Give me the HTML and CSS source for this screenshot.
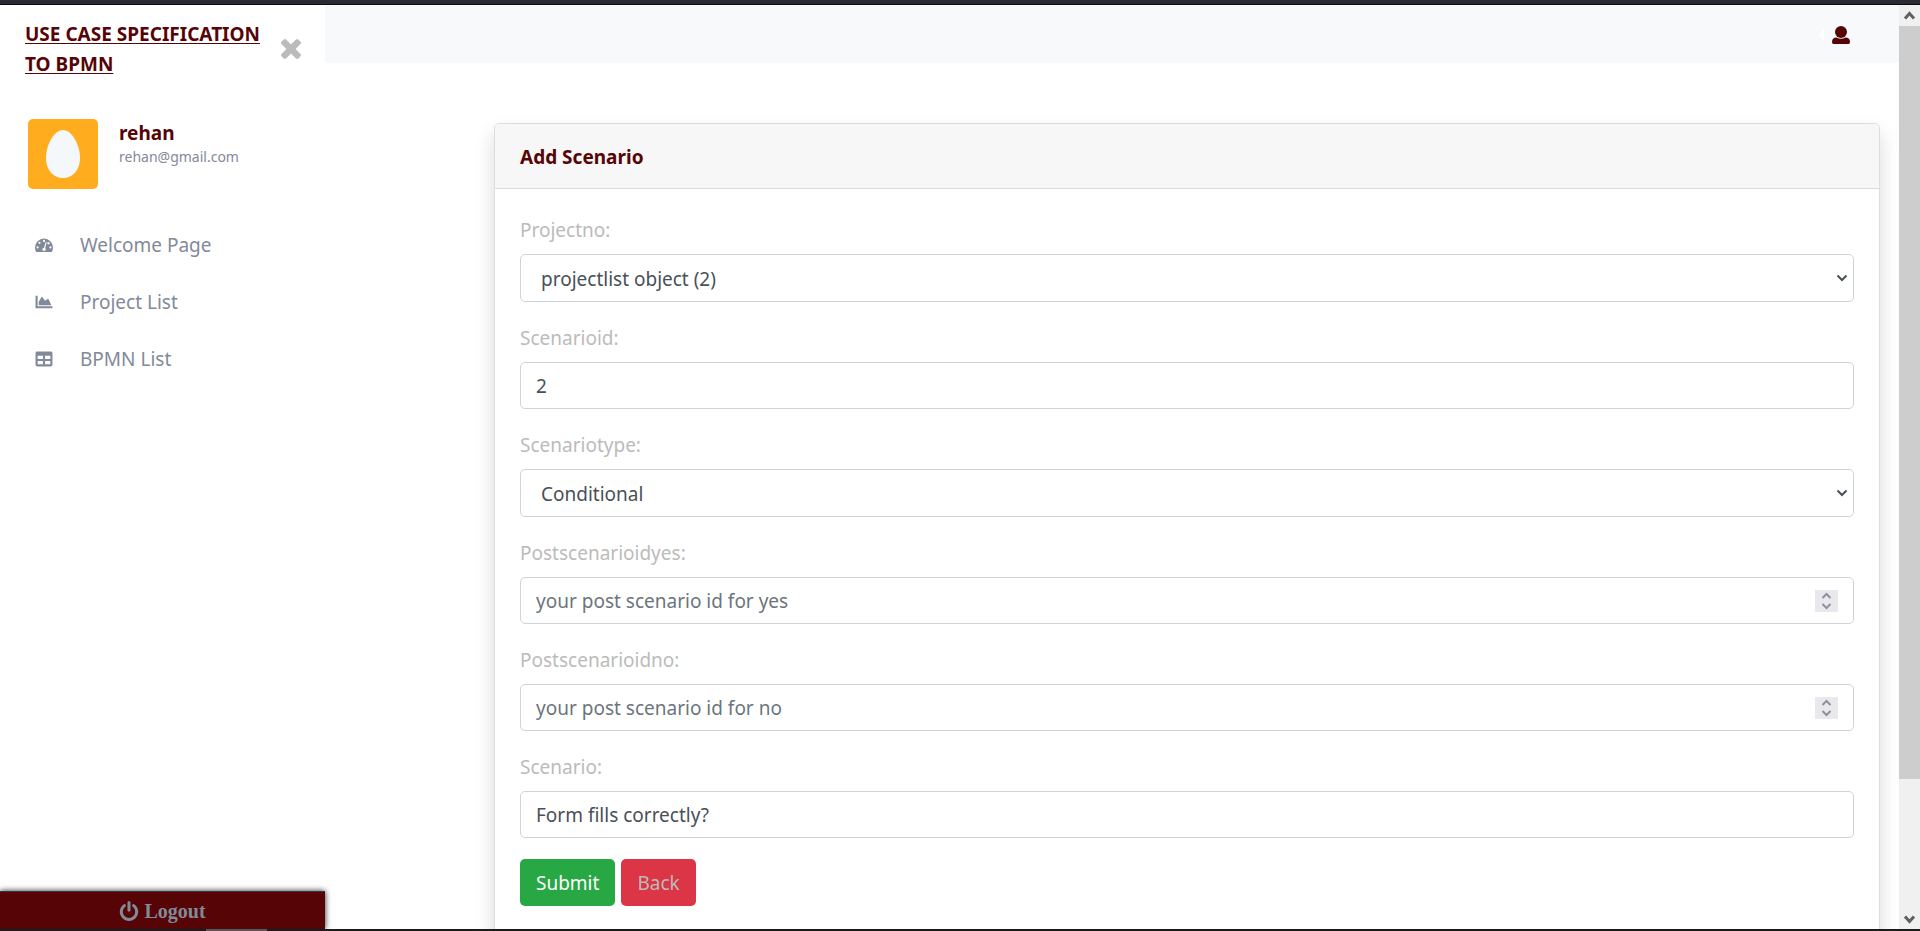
FILE: index.html
```html
<!DOCTYPE html>
<html lang="en">
<head>
<meta charset="utf-8">
<title>Add Scenario</title>
<link rel="stylesheet" href="styles.css">
</head>
<body>
<div class="viewport">
  <aside class="sidebar">
    <div class="brand-row">
      <a class="brand" href="#">USE CASE SPECIFICATION TO BPMN</a>
      <button class="close" type="button" aria-label="Close menu">
        <svg viewBox="302 238 1188 1188"><path d="M1490 1322q0 40-28 68l-136 136q-28 28-68 28t-68-28l-294-294-294 294q-28 28-68 28t-68-28l-136-136q-28-28-28-68t28-68l294-294-294-294q-28-28-28-68t28-68l136-136q28-28 68-28t68 28l294 294 294-294q28-28 68-28t68 28l136 136q28 28 28 68t-28 68l-294 294 294 294q28 28 28 68z" transform="translate(0 -128)"/></svg>
      </button>
    </div>
    <div class="profile">
      <svg class="avatar" viewBox="0 0 70 70"><rect width="70" height="70" rx="5" fill="#ffac1f"/><path d="M35 11C44 11 52 26 52 39C52 51 45 59 35 59S18 51 18 39C18 26 26 11 35 11Z" fill="#f4f8fb"/></svg>
      <div>
        <div class="user-name">rehan</div>
        <div class="user-mail">rehan@gmail.com</div>
      </div>
    </div>
    <nav class="menu">
      <a href="#"><svg viewBox="0 0 18 16"><path fill-rule="evenodd" d="M9 1.500A9 9 0 0 0 0 10.500Q0 13 1.200 15H16.800Q18 13 18 10.500A9 9 0 0 0 9 1.500ZM9 2.800a1.100 1.100 0 1 1 0 2.200a1.100 1.100 0 1 1 0-2.200ZM4.500 4.700a1.100 1.100 0 1 1 0 2.200a1.100 1.100 0 1 1 0-2.200ZM2.600 9.300a1.100 1.100 0 1 1 0 2.200a1.100 1.100 0 1 1 0-2.200ZM15.400 9.300a1.100 1.100 0 1 1 0 2.200a1.100 1.100 0 1 1 0-2.200ZM13.800 5.200a1.100 1.100 0 1 1-.6 2.100a1.100 1.100 0 1 1 .6-2.100ZM10.700 5.100L11.700 5.400L10.200 11A2 2 0 0 1 10.300 13.700H7.700A2 2 0 0 1 9.100 10.700Z"/></svg>Welcome Page</a>
      <a href="#"><svg viewBox="-16 32 544 448"><path d="M500 384c6.600 0 12 5.400 12 12v40c0 6.600-5.400 12-12 12H12c-6.600 0-12-5.400-12-12V76c0-6.600 5.400-12 12-12h40c6.600 0 12 5.400 12 12v308h436zM372.700 159.500L288 216l-85.300-113.700c-5.100-6.800-15.500-6.300-19.900 1L96 248v104h384l-89.900-187.800c-3.200-6.500-11.400-8.700-17.400-4.700z"/></svg>Project List</a>
      <a href="#"><svg viewBox="-16 16 544 480"><path d="M464 32H48C21.490 32 0 53.490 0 80v352c0 26.510 21.490 48 48 48h416c26.510 0 48-21.490 48-48V80c0-26.510-21.490-48-48-48zM224 416H64v-96h160v96zm0-160H64v-96h160v96zm224 160H288v-96h160v96zm0-160H288v-96h160v96z"/></svg>BPMN List</a>
    </nav>
    <a class="logout" href="#"><svg viewBox="128 0 1536 1664"><path d="M1664 896q0 156-61 298t-164 245-245 164-298 61-298-61-245-164-164-245-61-298q0-182 80.500-343t226.500-270q43-32 95.500-25t83.500 50q32 42 24.500 94.500t-49.500 84.500q-98 74-151.500 181t-53.500 228q0 104 40.500 198.500t109.500 163.500 163.500 109.500 198.500 40.500 198.500-40.500 163.500-109.500 109.500-163.500 40.500-198.500q0-121-53.500-228t-151.500-181q-42-32-49.500-84.500t24.500-94.500q31-43 84-50t95 25q146 109 226.500 270t80.500 343zm-640-768v640q0 52-38 90t-90 38-90-38-38-90v-640q0-52 38-90t90-38 90 38 38 90z"/></svg>Logout</a>
  </aside>
  <div class="page">
    <header class="topbar">
      <svg class="caret" viewBox="0 0 5 12"><path d="M5 0V12L0 6Z"/></svg>
      <button class="account" type="button" aria-label="Account">
        <svg viewBox="0 0 18 18"><circle cx="9" cy="6" r="6"/><path d="M0 16Q0 11.500 4.500 11.500Q9 14.200 13.500 11.500Q18 11.500 18 16Q18 18 16.500 18H1.500Q0 18 0 16Z"/></svg>
      </button>
    </header>
    <main class="content">
      <section class="card">
        <h1 class="card-header">Add Scenario</h1>
        <form class="card-body">
          <div class="field">
            <label for="projectno">Projectno:</label>
            <div class="control">
              <select id="projectno"><option>projectlist object (2)</option></select>
              <svg class="chevron" viewBox="0 0 12 8"><path d="M1.500 1.500L6 6L10.500 1.500"/></svg>
            </div>
          </div>
          <div class="field">
            <label for="scenarioid">Scenarioid:</label>
            <input id="scenarioid" type="text" value="2">
          </div>
          <div class="field">
            <label for="scenariotype">Scenariotype:</label>
            <div class="control">
              <select id="scenariotype"><option>Conditional</option></select>
              <svg class="chevron" viewBox="0 0 12 8"><path d="M1.500 1.500L6 6L10.500 1.500"/></svg>
            </div>
          </div>
          <div class="field">
            <label for="postyes">Postscenarioidyes:</label>
            <div class="control">
              <input id="postyes" type="number" placeholder="your post scenario id for yes">
              <svg class="spinner" viewBox="0 0 23 22"><path d="M7.500 8L11.500 4L15.500 8M7.500 14L11.500 18L15.500 14"/></svg>
            </div>
          </div>
          <div class="field">
            <label for="postno">Postscenarioidno:</label>
            <div class="control">
              <input id="postno" type="number" placeholder="your post scenario id for no">
              <svg class="spinner" viewBox="0 0 23 22"><path d="M7.500 8L11.500 4L15.500 8M7.500 14L11.500 18L15.500 14"/></svg>
            </div>
          </div>
          <div class="field">
            <label for="scenario">Scenario:</label>
            <input id="scenario" type="text" value="Form fills correctly?">
          </div>
          <div class="actions">
            <button class="btn submit" type="submit">Submit</button>
            <a class="btn back" href="#">Back</a>
          </div>
        </form>
      </section>
    </main>
  </div>
  <div class="scrollbar">
    <svg class="arrow" viewBox="0 0 21 21"><path d="M6 13.500L10.500 8.500L15 13.500"/></svg>
    <div class="track"><div class="thumb"></div></div>
    <svg class="arrow" viewBox="0 0 21 21"><path d="M6 8.500L10.500 13.500L15 8.500"/></svg>
  </div>
</div>
<div class="bottom-edge"><div class="tab-mark"></div></div>
</body>
</html>
```
FILE: styles.css
```css
* { box-sizing: border-box; }
body {
  margin: 0;
  height: 100vh;
  display: flex;
  flex-direction: column;
  overflow: hidden;
  border-top: 4px solid #2b2a33;
  background: #fff;
  color: #bbb;
  font: 19px/30px "Noto Sans", "Open Sans", sans-serif;
}
a { color: inherit; text-decoration: none; }
svg { display: block; fill: currentColor; }
button { font: inherit; border: 0; cursor: pointer; }
.viewport {
  flex: 1;
  min-height: 0;
  display: flex;
  overflow: hidden;
  border-top: 1px solid #0c0c0d;
}
.sidebar {
  width: 325px;
  flex: none;
  display: flex;
  flex-direction: column;
}
.brand-row {
  display: flex;
  align-items: center;
  justify-content: space-between;
  padding: 14px 24px 0 25px;
}
.brand {
  width: 244px;
  color: #560406;
  font-weight: 700;
  text-decoration: underline;
  text-underline-offset: 2px;
  text-decoration-thickness: 1px;
}
.close { padding: 0; background: none; color: #bbb; }
.close svg { width: 20px; height: 20px; }
.profile {
  display: flex;
  gap: 21px;
  padding: 40px 28px 0;
}
.avatar { width: 70px; height: 70px; }
.user-name { color: #560406; font-weight: 700; line-height: 28px; }
.user-mail { color: #818a99; font-size: 14px; line-height: 20px; }
.menu { padding-top: 27px; color: #818a99; }
.menu a {
  display: flex;
  align-items: center;
  gap: 27px;
  height: 57px;
  padding-left: 35px;
}
.menu svg { width: 18px; height: 16px; }
.logout {
  display: flex;
  align-items: center;
  justify-content: center;
  gap: 5px;
  height: 38px;
  margin-top: auto;
  border-top: 1px solid #343a40;
  background: #560406;
  box-shadow: 0 0 6px #222;
  color: #818a99;
  font: bold 20px/30px "Liberation Serif", serif;
}
.logout svg { width: 20px; height: 20px; }
.page { flex: 1; min-width: 0; }
.topbar {
  display: flex;
  align-items: center;
  justify-content: flex-end;
  gap: 8px;
  height: 58px;
  padding: 2px 49px 0 0;
  background: #f8f9fb;
}
.caret { width: 5px; height: 12px; color: #fff; }
.account { padding: 0; background: none; color: #560406; }
.account svg { width: 18px; height: 18px; }
.content { padding: 60px 19px 0 169px; }
.card {
  border: 1px solid #dcdddf;
  border-radius: 5px;
  background: #fff;
  box-shadow: 0 10px 20px rgba(0, 0, 0, 0.15);
}
.card-header {
  margin: 0;
  padding: 18px 25px 16px;
  border-bottom: 1px solid #d9dadc;
  border-radius: 4px 4px 0 0;
  background: #f7f7f7;
  color: #560406;
  font-size: 19px;
  line-height: 30px;
}
.card-body {
  display: flex;
  flex-direction: column;
  gap: 21px;
  padding: 26px 25px 60px;
}
.field { display: flex; flex-direction: column; gap: 9px; }
.control { position: relative; }
input, select {
  appearance: none;
  display: block;
  width: 100%;
  height: 47px;
  padding: 1px 15px 0;
  border: 1px solid #ced4da;
  border-radius: 5px;
  background: #fff;
  color: #495057;
  font: inherit;
}
select { height: 48px; padding-left: 20px; }
input[type="number"] { appearance: textfield; }
input::placeholder { color: #6c757d; opacity: 1; }
.chevron, .spinner { position: absolute; fill: none; pointer-events: none; }
.chevron {
  top: 20px;
  right: 6px;
  width: 12px;
  height: 8px;
  stroke: #495057;
  stroke-width: 2;
}
.spinner {
  top: 13px;
  right: 16px;
  width: 23px;
  height: 22px;
  background: #e9e9ed;
  stroke: #8f8f9d;
  stroke-width: 2;
}
.actions { display: flex; gap: 6px; }
.btn {
  padding: 9px 16px 8px;
  border-radius: 5px;
}
.submit { background: #28a745; color: #fff; }
.back { background: #dc3545; color: #bbb; }
.scrollbar {
  width: 21px;
  flex: none;
  display: flex;
  flex-direction: column;
  background: #f0f0f0;
}
.arrow { width: 21px; height: 21px; fill: none; stroke: #606060; stroke-width: 3; }
.track { flex: 1; }
.thumb { height: 85.4%; background: #cdcdcd; }
.bottom-edge { height: 2px; flex: none; background: #1c1a1b; }
.tab-mark { width: 61px; height: 2px; margin-left: 206px; background: #5a5556; }
```
